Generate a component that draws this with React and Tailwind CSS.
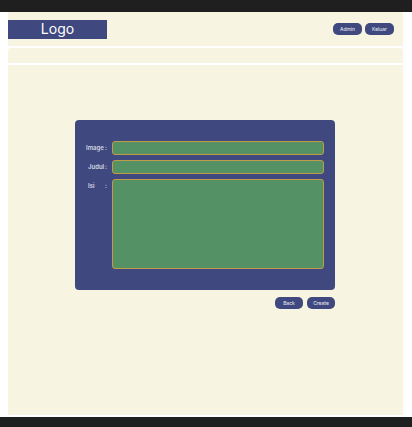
import React from "react";

const pill =
  "h-3 rounded-[5px] bg-[#40497f] text-center text-[5px] leading-3 text-white/90";

const field =
  "block min-w-0 flex-1 rounded-[3px] border border-[#c39a45] bg-[#549265] px-1 text-[6px] text-white outline-none";

const label =
  "flex w-[21px] shrink-0 justify-between text-[6px] leading-[14px] font-semibold text-[#d5d7e3]";

export default function App() {
  return (
    <div className="flex min-h-screen flex-col bg-white font-['Inter',sans-serif]">
      <div className="h-3 bg-[#1f1f1f]" />

      <div className="ml-2 mr-[9px] flex flex-1 flex-col gap-[2px] pb-[2px]">
        <header className="flex h-[34px] items-center justify-between bg-[#f8f4e2] pr-[9px]">
          <a
            href="#"
            className="block h-[19px] w-[99px] bg-[#40497f] text-center text-[14px] leading-[18px] text-white"
          >
            Logo
          </a>
          <div className="flex gap-[3px]">
            <button type="button" className={`${pill} w-[29px]`}>
              Admin
            </button>
            <button type="button" className={`${pill} w-[29px]`}>
              Keluar
            </button>
          </div>
        </header>

        <nav className="h-[15px] rounded-t-[3px] bg-[#f8f4e2]" />

        <main className="flex-1 bg-[#f8f4e2] px-[67px] pt-[55px]">
          <form className="mr-px">
            <div className="flex flex-col gap-[5px] rounded-[4px] bg-[#40497f] px-[11px] py-[21px]">
              <div className="flex gap-[5px]">
                <label htmlFor="image" className={label}>
                  <span>Image</span>
                  <span>:</span>
                </label>
                <input id="image" type="text" className={`${field} h-[14px]`} />
              </div>
              <div className="flex gap-[5px]">
                <label htmlFor="judul" className={`${label} pl-[2px]`}>
                  <span>Judul</span>
                  <span>:</span>
                </label>
                <input id="judul" type="text" className={`${field} h-[14px]`} />
              </div>
              <div className="flex gap-[5px]">
                <label htmlFor="isi" className={`${label} pl-[2px]`}>
                  <span>Isi</span>
                  <span>:</span>
                </label>
                <textarea id="isi" className={`${field} h-[90px] resize-none`} />
              </div>
            </div>
            <div className="mt-[7px] flex justify-end gap-1">
              <button type="button" className={`${pill} w-[28px]`}>
                Back
              </button>
              <button type="submit" className={`${pill} w-[28px]`}>
                Create
              </button>
            </div>
          </form>
        </main>
      </div>

      <div className="h-[10px] bg-[#1e201f]" />
    </div>
  );
}
